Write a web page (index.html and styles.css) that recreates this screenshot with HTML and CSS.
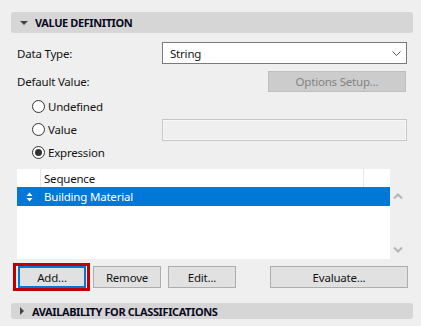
FILE: index.html
```html
<!DOCTYPE html>
<html lang="en">
<head>
  <meta charset="UTF-8">
  <title>Value Definition</title>
  <link rel="stylesheet" href="styles.css">
</head>
<body>

<div class="panel">
  <div class="section-header">
    <span class="tri-down"></span>
    <span class="section-title">VALUE DEFINITION</span>
  </div>

  <div class="content">
    <div class="field-row select-row">
      <div class="field-label">Data Type:</div>
      <div class="select-box">
        <span>String</span>
        <svg class="chevron" width="9" height="5" viewBox="0 0 9 5"><path d="M0.5 0.5 L4.5 4.5 L8.5 0.5" fill="none" stroke="#555" stroke-width="1"/></svg>
      </div>
    </div>

    <div class="field-row options-row">
      <div class="field-label">Default Value:</div>
      <button class="btn btn-disabled options-btn" disabled>Options Setup...</button>
    </div>

    <div class="radio-list">
      <div class="radio-row">
        <span class="radio"></span><span class="radio-text">Undefined</span>
      </div>
      <div class="radio-row">
        <span class="radio"></span><span class="radio-text value-text">Value</span>
        <div class="text-field"></div>
      </div>
      <div class="radio-row">
        <span class="radio checked"></span><span class="radio-text">Expression</span>
      </div>
    </div>

    <div class="list-area">
      <div class="list">
        <div class="list-head">
          <div class="col-handle"></div>
          <div class="col-name">Sequence</div>
          <div class="col-end"></div>
        </div>
        <div class="list-row selected">
          <div class="col-handle">
            <svg width="7" height="10" viewBox="0 0 7 10"><path d="M3.5 0.5 L6.5 4 L0.5 4 Z M3.5 9.5 L6.5 6 L0.5 6 Z" fill="#fff"/></svg>
          </div>
          <div class="col-name">Building Material</div>
        </div>
      </div>
      <div class="scrollbar">
        <svg width="10" height="6" viewBox="0 0 10 6"><path d="M1 5.5 L5 1.5 L9 5.5" fill="none" stroke="#b4b4b4" stroke-width="2"/></svg>
        <svg width="10" height="6" viewBox="0 0 10 6"><path d="M1 0.5 L5 4.5 L9 0.5" fill="none" stroke="#b4b4b4" stroke-width="2"/></svg>
      </div>
    </div>
  </div>

  <div class="button-row">
    <div class="highlight">
      <button class="btn btn-focus">Add...</button>
    </div>
    <button class="btn">Remove</button>
    <button class="btn edit-btn">Edit...</button>
    <button class="btn evaluate-btn">Evaluate...</button>
  </div>

  <div class="section-header collapsed">
    <span class="tri-right"></span>
    <span class="section-title">AVAILABILITY FOR CLASSIFICATIONS</span>
  </div>
</div>

</body>
</html>
```

FILE: styles.css
```css
body {
  margin: 0;
  background: #efefef;
  font-family: "Noto Sans", "Open Sans", sans-serif;
  font-size: 11.5px;
  letter-spacing: -0.2px;
  color: #141414;
}
.panel {
  padding: 12px 0 0 11px;
  width: 402px;
}
.section-header {
  height: 21px;
  background: #d6d6d6;
  border-radius: 3px;
  display: flex;
  align-items: center;
  padding-left: 9px;
}
.section-header.collapsed {
  height: 16px;
  margin-top: 12px;
}
.tri-down {
  width: 0;
  height: 0;
  border-left: 4px solid transparent;
  border-right: 4px solid transparent;
  border-top: 4px solid #444;
  margin-right: 7px;
}
.tri-right {
  width: 0;
  height: 0;
  border-top: 4px solid transparent;
  border-bottom: 4px solid transparent;
  border-left: 4px solid #444;
  margin-right: 8px;
}
.section-title {
  font-weight: bold;
  font-size: 11px;
  letter-spacing: -0.4px;
  color: #0a0a1e;
}
.content {
  padding-left: 6px;
}
.field-row {
  display: flex;
  align-items: center;
}
.field-label {
  width: 145px;
}
.select-row {
  margin-top: 9px;
  height: 22px;
}
.select-box {
  width: 245px;
  height: 22px;
  box-sizing: border-box;
  border: 1px solid #7a7a7a;
  background: #fff;
  display: flex;
  align-items: center;
  justify-content: space-between;
  padding: 0 5px 0 7px;
}
.options-row {
  margin-top: 7px;
  height: 21px;
}
.options-row .field-label {
  width: 251px;
}
.btn {
  font-family: inherit;
  font-size: 11.5px;
  letter-spacing: -0.2px;
  color: #141414;
  height: 22px;
  width: 68px;
  padding: 0;
  border: 1px solid #adadad;
  background: #e1e1e1;
  box-sizing: border-box;
}
.btn-disabled {
  background: #cccccc;
  border-color: #bfbfbf;
  color: #838383;
}
.options-btn {
  width: 138px;
  height: 21px;
}
.radio-list {
  margin-top: 3px;
  padding-left: 15px;
}
.radio-row {
  height: 23px;
  display: flex;
  align-items: center;
}
.radio {
  width: 13px;
  height: 13px;
  box-sizing: border-box;
  border: 1px solid #333;
  border-radius: 50%;
  background: #fff;
  display: flex;
  align-items: center;
  justify-content: center;
  margin-right: 3px;
}
.radio.checked::after {
  content: "";
  width: 7px;
  height: 7px;
  border-radius: 50%;
  background: #333;
}
.value-text {
  width: 114px;
}
.text-field {
  width: 245px;
  height: 22px;
  box-sizing: border-box;
  border: 1px solid #c6c6c6;
  box-shadow: inset 0 0 0 1px #f7f7f7;
  background: #efefef;
}
.list-area {
  margin-top: 5px;
  display: flex;
}
.list {
  width: 373px;
  height: 90px;
  background: #fff;
}
.list-head,
.list-row {
  display: flex;
  align-items: center;
}
.list-head {
  height: 18px;
}
.list-row {
  height: 19px;
}
.col-handle {
  width: 24px;
  height: 100%;
  box-sizing: border-box;
  display: flex;
  align-items: center;
  justify-content: center;
}
.list-head .col-handle {
  border-right: 1px solid #e6e6e6;
}
.col-name {
  flex: 1;
  padding-left: 3px;
}
.col-end {
  width: 26px;
  height: 100%;
  border-left: 1px solid #e6e6e6;
}
.selected {
  background: #0078d7;
  color: #fff;
}
.scrollbar {
  width: 15px;
  height: 90px;
  display: flex;
  flex-direction: column;
  justify-content: space-between;
  align-items: center;
  padding: 24px 0 6px;
  box-sizing: border-box;
}
.button-row {
  margin-top: 4px;
  padding-left: 2px;
  display: flex;
  align-items: center;
  width: 395px;
}
.highlight {
  border: 3px solid #c00000;
  padding: 0 1px 0 2px;
  height: 22px;
  margin-right: 3px;
}
.btn-focus {
  border: 2px solid #0078d7;
}
.edit-btn {
  margin-left: 7px;
}
.evaluate-btn {
  width: 138px;
  margin-left: auto;
}
```
